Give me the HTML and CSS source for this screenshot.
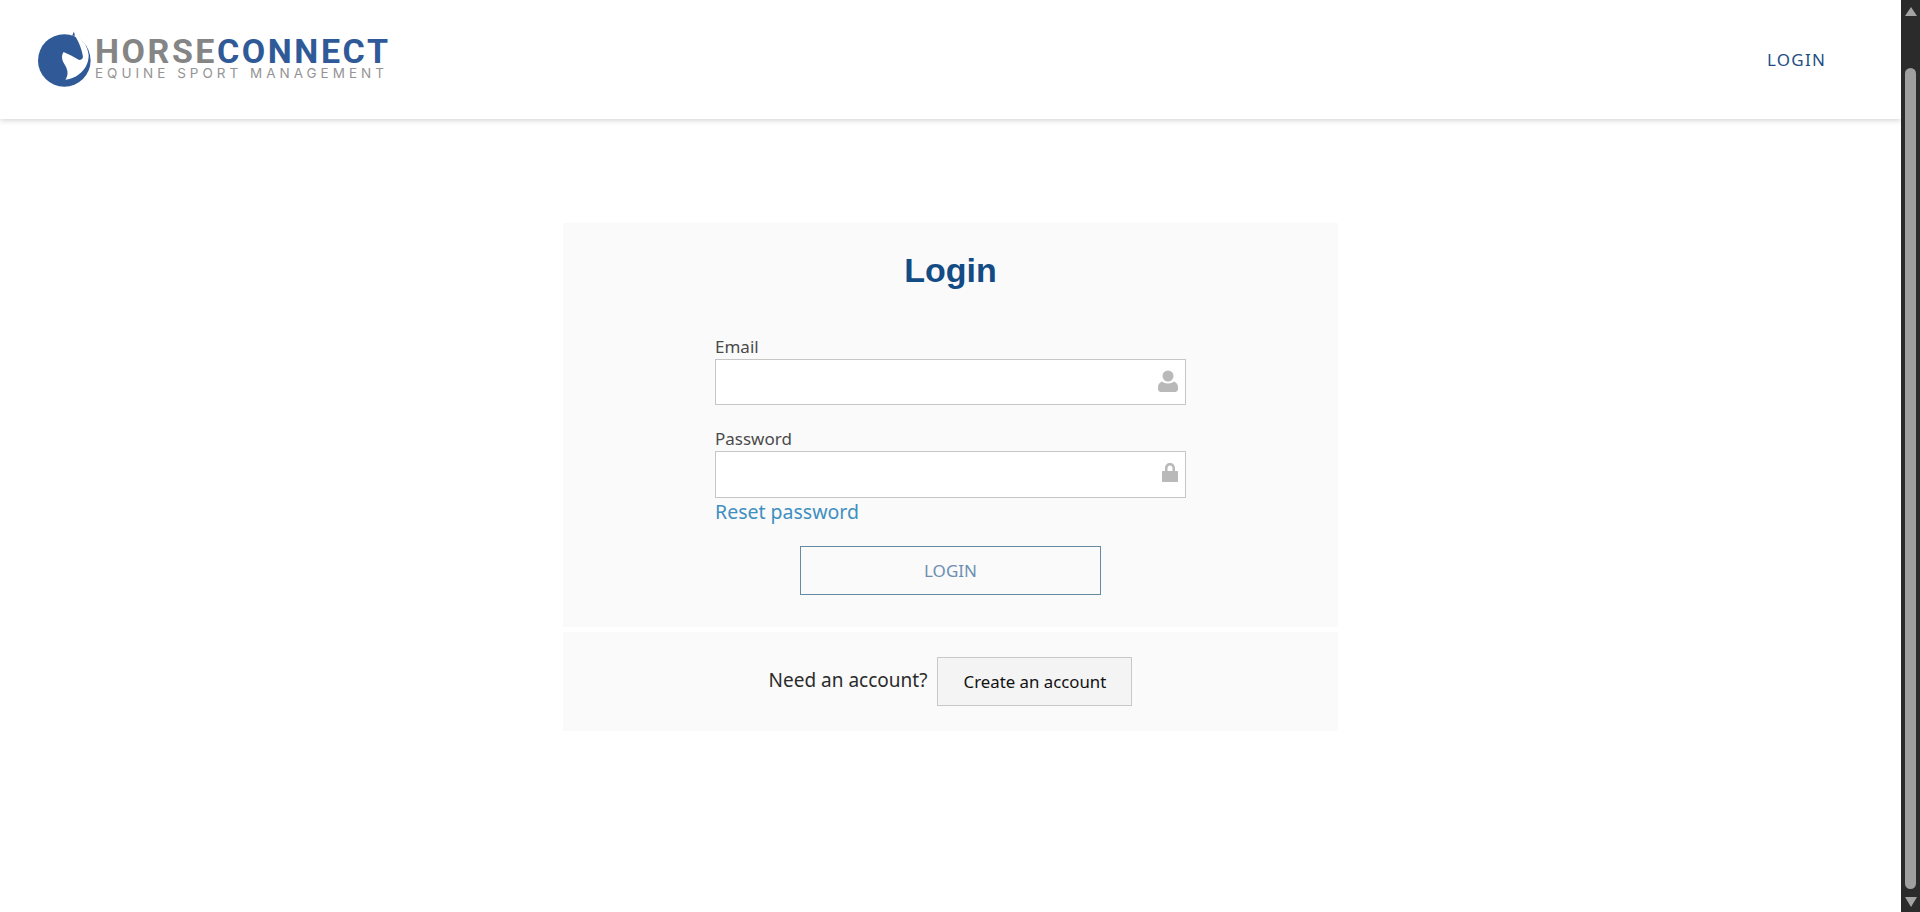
FILE: index.html
```html
<!DOCTYPE html>
<html lang="en">
<head>
    <meta charset="UTF-8">
    <meta name="viewport" content="width=device-width, initial-scale=1.0">
    <title>Login</title>
    <link rel="stylesheet" href="styles.css">
</head>
<body>
    <div class="page">
        <header class="header">
            <a class="logo" href="#">
                <svg class="logo-mark" viewBox="0 0 56 58" width="53" height="55">
                    <circle cx="27.800" cy="30" r="27.800" fill="#2f5a97"/>
                    <path fill="#2f5a97" d="M36 4 L38 -0.500 L39 4 Z"/>
                    <path fill="#fff" d="M39 4 C46 7 52 13 53.500 24 C54 35 46 48 29 50.500 C33 44 31 39 28 34 C25 29 24.500 25 27 21 L35.500 25 L43.500 29.500 C46 29.500 47.500 28 47.500 26 C46.500 19 43 10 39 4 Z"/>
                </svg>
                <span class="logo-text">
                    <span class="logo-name">HORSE<b>CONNECT</b></span>
                    <span class="logo-sub">EQUINE SPORT MANAGEMENT</span>
                </span>
            </a>
            <a class="nav-login" href="#">LOGIN</a>
        </header>

        <main class="content">
            <section class="card login-card">
                <h1>Login</h1>
                <form class="login-form">
                    <label class="field">
                        <span class="field-label">Email</span>
                        <span class="input-wrap">
                            <input type="text">
                            <svg class="input-icon" viewBox="0 0 20 22" width="20" height="22">
                                <circle cx="10" cy="6" r="5.500"/>
                                <path d="M4 11.500 C6 14 14 14 16 11.500 C18.500 12.500 20 14.500 20 17 L20 19 C20 21 18.500 22 17 22 L3 22 C1.500 22 0 21 0 19 L0 17 C0 14.500 1.500 12.500 4 11.500 Z"/>
                            </svg>
                        </span>
                    </label>
                    <label class="field">
                        <span class="field-label">Password</span>
                        <span class="input-wrap">
                            <input type="password">
                            <svg class="input-icon lock" viewBox="0 0 16 19" width="16" height="19">
                                <path d="M3 8 L3 5.500 C3 2 5 0 8 0 C11 0 13 2 13 5.500 L13 8 L15 8 C15.600 8 16 8.400 16 9 L16 18 C16 18.600 15.600 19 15 19 L1 19 C0.400 19 0 18.600 0 18 L0 9 C0 8.400 0.400 8 1 8 Z M5.500 8 L10.500 8 L10.500 5.500 C10.500 3.500 9.500 2.500 8 2.500 C6.500 2.500 5.500 3.500 5.500 5.500 Z" fill-rule="evenodd"/>
                            </svg>
                        </span>
                    </label>
                    <a class="reset-link" href="#">Reset password</a>
                    <button type="button" class="login-button">LOGIN</button>
                </form>
            </section>
            <section class="card signup-card">
                <span class="signup-text">Need an account?</span>
                <button type="button" class="signup-button">Create an account</button>
            </section>
        </main>
    </div>

    <div class="scrollbar">
        <span class="arrow up"></span>
        <span class="thumb"></span>
        <span class="arrow down"></span>
    </div>
</body>
</html>
```

FILE: styles.css
```css
html, body {
    height: 100%;
}

body {
    font-family: "Noto Sans", "Open Sans", sans-serif;
    background-color: #fff;
    margin: 0;
    padding: 0;
    display: flex;
    overflow: hidden;
}

.page {
    flex: 1;
    min-width: 0;
}

.header {
    height: 119px;
    background-color: #fff;
    box-shadow: 0 1px 6px rgba(0, 0, 0, 0.2);
    display: flex;
    justify-content: space-between;
    align-items: center;
    padding: 0 75px 0 38px;
}

.logo {
    display: flex;
    align-items: center;
    gap: 4px;
    text-decoration: none;
}

.logo-mark {
    overflow: visible;
}

.logo-text {
    display: flex;
    flex-direction: column;
    margin-top: -4px;
}

.logo-name {
    font-family: Roboto, "Liberation Sans", sans-serif;
    font-size: 34px;
    line-height: 30px;
    font-weight: 700;
    letter-spacing: 2.550px;
    color: #858585;
    white-space: nowrap;
}

.logo-name b {
    color: #2f5a97;
    font-weight: 700;
}

.logo-sub {
    font-family: Inter, "Open Sans", sans-serif;
    font-size: 13.500px;
    line-height: 14px;
    letter-spacing: 4px;
    color: #949494;
    white-space: nowrap;
}

.nav-login {
    font-size: 17px;
    letter-spacing: 1.200px;
    color: #1f4e85;
    text-decoration: none;
}

.content {
    width: 775px;
    margin: 104px 0 0 563px;
    display: flex;
    flex-direction: column;
    gap: 5px;
}

.card {
    background-color: #fafafa;
}

.login-card {
    height: 404px;
    box-sizing: border-box;
    padding-top: 27px;
}

.login-card h1 {
    margin: 0 0 47px;
    font-family: "Liberation Sans", Arial, sans-serif;
    font-size: 34px;
    line-height: 40px;
    font-weight: 700;
    color: #134b85;
    text-align: center;
}

.login-form {
    width: 471px;
    margin: 0 auto;
    display: flex;
    flex-direction: column;
}

.field {
    display: block;
    margin-bottom: 24px;
}

.field:nth-child(2) {
    margin-bottom: 0;
}

.field-label {
    display: block;
    font-size: 17px;
    line-height: 20px;
    padding-bottom: 2px;
    color: #4a4a4a;
}

.input-wrap {
    display: block;
    position: relative;
}

.input-wrap input {
    display: block;
    width: 100%;
    height: 47px;
    box-sizing: border-box;
    border: 1px solid #c6c6c6;
    background-color: #fff;
    outline: none;
}

.field:first-child .input-wrap input {
    height: 46px;
}

.input-icon {
    position: absolute;
    right: 8px;
    top: 11px;
    fill: #b9b9b9;
}

.input-icon.lock {
    right: 8px;
    top: 12px;
}

.reset-link {
    font-size: 19.500px;
    line-height: 28px;
    color: #3f8fc0;
    text-decoration: none;
}

.login-button {
    align-self: center;
    width: 301px;
    height: 49px;
    margin-top: 20px;
    background: transparent;
    border: 1px solid #668a9f;
    font-family: inherit;
    font-size: 17px;
    color: #6d8fb3;
    cursor: pointer;
}

.signup-card {
    height: 99px;
    display: flex;
    justify-content: center;
    align-items: center;
    gap: 10px;
}

.signup-text {
    font-size: 19px;
    color: #2b2b2b;
    margin-top: -4px;
}

.signup-button {
    width: 195px;
    height: 49px;
    background-color: #f4f4f4;
    border: 1px solid #c8c8c8;
    font-family: inherit;
    font-size: 16.800px;
    color: #111;
    cursor: pointer;
}

.scrollbar {
    width: 19px;
    flex-shrink: 0;
    background-color: #2b2b2b;
    display: flex;
    flex-direction: column;
    align-items: center;
    padding: 7px 0 5px;
    box-sizing: border-box;
}

.thumb {
    flex: 1;
    width: 11px;
    margin: 52px 0 8px;
    border-radius: 6px;
    background-color: #9f9f9f;
}

.arrow {
    width: 0;
    height: 0;
    border-left: 6.500px solid transparent;
    border-right: 6.500px solid transparent;
}

.arrow.up {
    border-bottom: 9px solid #a3a3a3;
}

.arrow.down {
    border-top: 10px solid #a3a3a3;
}
```
